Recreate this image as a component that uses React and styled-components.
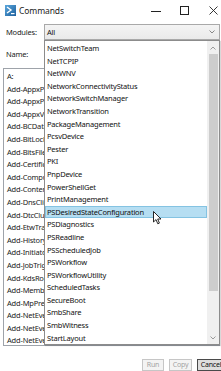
import React from 'react';
import styled, { createGlobalStyle } from 'styled-components';

const Global = createGlobalStyle`
  html, body { margin: 0; padding: 0; background: #ffffff; }
  body { font-family: "Noto Sans", "Open Sans", sans-serif; }
  * { box-sizing: border-box; }
`;

const ROW = 12.6;

const Window = styled.div`
  position: relative;
  width: 221px;
  height: 371px;
  overflow: hidden;
  background: #ffffff;
  display: flex;
  flex-direction: column;
  font-size: 7.5px;
  letter-spacing: -0.2px;
  color: #111;
`;

const TitleBar = styled.div`
  height: 21px;
  display: flex;
  align-items: center;
  padding-left: 5px;
`;

const Title = styled.span`
  flex: 1;
  margin-left: 3px;
  font-size: 8.5px;
  letter-spacing: -0.1px;
  color: #222;
`;

const Controls = styled.div`
  display: flex;
  margin-right: -7px;
`;

const ControlButton = styled.div`
  width: 29px;
  height: 21px;
  display: flex;
  align-items: center;
  justify-content: center;
`;

const Body = styled.div`
  flex: 1;
  display: flex;
  flex-direction: column;
  padding: 3px 1px 0 3px;
`;

const FieldRow = styled.div`
  display: flex;
  align-items: center;
  height: 16px;
  margin-bottom: 6px;
`;

const Label = styled.span`
  width: 41px;
  padding-left: 3px;
  color: #222;
`;

const Combo = styled.div`
  flex: 1;
  height: 16px;
  border: 1px solid #a9a9a9;
  background: linear-gradient(#f4f4f4, #eaeaea);
  display: flex;
  align-items: center;
  padding-left: 2px;
  padding-right: 4px;
`;

const ComboText = styled.span`
  flex: 1;
`;

const TextBox = styled.div`
  flex: 1;
  height: 16px;
  border: 1px solid #abadb3;
  background: #fff;
`;

const List = styled.div`
  height: 278px;
  border: 1px solid #9ea3aa;
  padding-top: 1px;
  overflow: hidden;
`;

const ListItem = styled.div`
  height: ${ROW}px;
  line-height: ${ROW}px;
  padding-left: 3px;
  white-space: nowrap;
  color: #222;
`;

const ButtonRow = styled.div`
  margin-top: 13px;
  display: flex;
  justify-content: flex-end;
  gap: 5px;
  margin-right: -5px;
`;

const Button = styled.div`
  width: ${p => p.$w}px;
  height: 12px;
  font-size: 7px;
  line-height: 10px;
  text-align: center;
  border: 1px solid ${p => (p.$disabled ? '#c6c6c6' : '#4a4a4a')};
  background: ${p => (p.$disabled ? '#f3f3f3' : '#dedede')};
  color: ${p => (p.$disabled ? '#a3a3a3' : '#111')};
`;

const Popup = styled.div`
  position: absolute;
  left: 44px;
  top: 40px;
  width: 176px;
  height: 305px;
  border: 1px solid #8c8c8c;
  background: #fff;
  display: flex;
  box-shadow: 1px 1px 1px rgba(0, 0, 0, 0.15);
`;

const PopupItems = styled.div`
  flex: 1;
  padding-top: 1px;
  overflow: hidden;
`;

const PopupItem = styled.div`
  height: ${ROW}px;
  line-height: ${ROW - 2}px;
  padding-left: 1px;
  white-space: nowrap;
  color: #111;
  border: 1px solid ${p => (p.$active ? '#84c3e2' : 'transparent')};
  background: ${p => (p.$active ? '#b6def2' : 'transparent')};
`;

const ScrollBar = styled.div`
  width: 12px;
  background: #f0f0f0;
  display: flex;
  flex-direction: column;
  align-items: center;
`;

const ScrollArrow = styled.div`
  height: 13px;
  width: 100%;
  display: flex;
  align-items: center;
  justify-content: center;
`;

const Thumb = styled.div`
  width: 9px;
  height: 237px;
  background: #cdcdcd;
`;

const Track = styled.div`
  flex: 1;
`;

const Cursor = styled.svg`
  position: absolute;
  left: 153px;
  top: 211px;
`;

const leftItems = [
  'A:',
  'Add-AppxProvisionedPackage',
  'Add-AppxPackage',
  'Add-AppxVolume',
  'Add-BCDataCacheExtension',
  'Add-BitLockerKeyProtector',
  'Add-BitsFile',
  'Add-CertificateEnrollmentPolicyServer',
  'Add-Computer',
  'Add-Content',
  'Add-DnsClientNrptRule',
  'Add-DtcClusterTMMapping',
  'Add-EtwTraceProvider',
  'Add-History',
  'Add-InitiatorIdToMaskingSet',
  'Add-JobTrigger',
  'Add-KdsRootKey',
  'Add-Member',
  'Add-MpPreference',
  'Add-NetEventNetworkAdapter',
  'Add-NetEventPacketCaptureProvider',
  'Add-NetEventProvider',
];

const modules = [
  'NetSwitchTeam',
  'NetTCPIP',
  'NetWNV',
  'NetworkConnectivityStatus',
  'NetworkSwitchManager',
  'NetworkTransition',
  'PackageManagement',
  'PcsvDevice',
  'Pester',
  'PKI',
  'PnpDevice',
  'PowerShellGet',
  'PrintManagement',
  'PSDesiredStateConfiguration',
  'PSDiagnostics',
  'PSReadline',
  'PSScheduledJob',
  'PSWorkflow',
  'PSWorkflowUtility',
  'ScheduledTasks',
  'SecureBoot',
  'SmbShare',
  'SmbWitness',
  'StartLayout',
];

const Chevron = ({ up, color = '#9a9a9a' }) => (
  <svg width="6" height="4" viewBox="0 0 6 4">
    <path d={up ? 'M0.5 3.5 L3 1 L5.5 3.5' : 'M0.5 0.5 L3 3 L5.5 0.5'} fill="none" stroke={color} strokeWidth="1" />
  </svg>
);

const AppIcon = () => (
  <svg width="11" height="11" viewBox="0 0 11 11">
    <defs>
      <linearGradient id="ig" x1="0" y1="0" x2="1" y2="1">
        <stop offset="0" stopColor="#5aa7dd" />
        <stop offset="1" stopColor="#1d5f9c" />
      </linearGradient>
    </defs>
    <rect x="0" y="0" width="11" height="11" fill="url(#ig)" />
    <path d="M2 2 L6 5 L2 8" fill="none" stroke="#fff" strokeWidth="1.4" />
    <rect x="6" y="8" width="3.5" height="1.2" fill="#fff" />
  </svg>
);

export default function App() {
  return (
    <>
      <Global />
      <Window>
        <TitleBar>
          <AppIcon />
          <Title>Commands</Title>
          <Controls>
            <ControlButton>
              <svg width="10" height="10" viewBox="0 0 10 10">
                <path d="M0 5.5 H10" stroke="#222" strokeWidth="1" />
              </svg>
            </ControlButton>
            <ControlButton>
              <svg width="9" height="9" viewBox="0 0 9 9">
                <rect x="0.5" y="0.5" width="8" height="8" fill="none" stroke="#222" strokeWidth="1" />
              </svg>
            </ControlButton>
            <ControlButton>
              <svg width="9" height="9" viewBox="0 0 9 9">
                <path d="M0.5 0.5 L8.5 8.5 M8.5 0.5 L0.5 8.5" stroke="#222" strokeWidth="0.9" />
              </svg>
            </ControlButton>
          </Controls>
        </TitleBar>
        <Body>
          <FieldRow>
            <Label>Modules:</Label>
            <Combo>
              <ComboText>All</ComboText>
              <Chevron color="#888" />
            </Combo>
          </FieldRow>
          <FieldRow>
            <Label>Name:</Label>
            <TextBox />
          </FieldRow>
          <List>
            {leftItems.map((t, i) => (
              <ListItem key={i}>{t}</ListItem>
            ))}
          </List>
          <ButtonRow>
            <Button $w={22} $disabled>Run</Button>
            <Button $w={23} $disabled>Copy</Button>
            <Button $w={28}>Cancel</Button>
          </ButtonRow>
        </Body>
        <Popup>
          <PopupItems>
            {modules.map(m => (
              <PopupItem key={m} $active={m === 'PSDesiredStateConfiguration'}>{m}</PopupItem>
            ))}
          </PopupItems>
          <ScrollBar>
            <ScrollArrow><Chevron up /></ScrollArrow>
            <Thumb />
            <Track />
            <ScrollArrow><Chevron /></ScrollArrow>
          </ScrollBar>
        </Popup>
        <Cursor width="9" height="14" viewBox="0 0 9 14">
          <path d="M0.5 0.5 L0.5 11 L3 8.6 L4.8 12.8 L6.4 12.1 L4.7 8 L8 8 Z" fill="#fff" stroke="#111" strokeWidth="0.9" strokeLinejoin="round" />
        </Cursor>
      </Window>
    </>
  );
}
